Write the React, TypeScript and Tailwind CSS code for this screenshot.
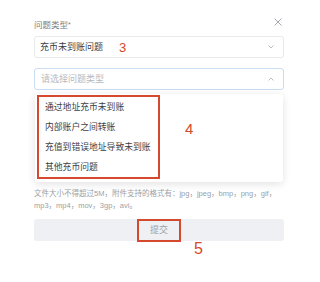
import React from "react";

const options = ["通过地址充币未到账", "内部账户之间转账", "充值到错误地址导致未到账", "其他充币问题"];

function Chevron({ up }: { up?: boolean }) {
  return (
    <svg width="6" height="4" viewBox="0 0 6 4" fill="none" stroke="#b3b6bc" strokeWidth="0.9">
      {up ? <path d="M0.5 3.5 3 1 5.5 3.5" /> : <path d="M0.5 0.5 3 3 5.5 0.5" />}
    </svg>
  );
}

export default function App() {
  return (
    <div className="h-[282px] w-[320px] overflow-hidden bg-white font-['Liberation_Sans','Noto_Sans_CJK_SC',sans-serif]">
      <div className="pl-[34px] pr-[36px] pt-[17px]">
        {/* Header */}
        <div className="flex h-[14px] items-start justify-between">
          <span className="mt-[2px] text-[8.5px] leading-[12px] text-[#7b7f86]">
            问题类型<span className="align-top text-[7px]">*</span>
          </span>
          <svg className="mr-[2px] mt-[1px]" width="8" height="8" viewBox="0 0 8 8" stroke="#9a9ea5" strokeWidth="0.9">
            <path d="M0.5 0.5 7.5 7.5M7.5 0.5 0.5 7.5" />
          </svg>
        </div>

        {/* Selected type */}
        <div className="mt-[5px] flex h-[22px] items-center justify-between rounded-[3px] border border-[#e7e9ec] pl-[5px] pr-[9px]">
          <div className="flex items-center">
            <span className="text-[9px] leading-none text-[#3a3d42]">充币未到账问题</span>
            <span className="ml-[16px] text-[13px] leading-none text-[#d4482c]">3</span>
          </div>
          <Chevron />
        </div>

        {/* Open select */}
        <div className="mt-[10px] flex h-[22px] items-center justify-between rounded-[3px] border border-[#cadcf1] pl-[6px] pr-[9px]">
          <span className="text-[9px] leading-none text-[#b5b9c0]">请选择问题类型</span>
          <Chevron up />
        </div>

        {/* Dropdown panel */}
        <div className="mx-[1px] mt-[4px] flex h-[88px] items-start rounded-[3px] bg-white pl-[2px] pt-[1px] shadow-[0_2px_8px_rgba(0,0,0,0.12)]">
          <div className="w-[123px] border-2 border-[#d5492e] pl-[6px]">
            {options.map((o) => (
              <div key={o} className="text-[8.8px] leading-[20px] text-[#3d4046]">
                {o}
              </div>
            ))}
          </div>
          <span className="ml-[25px] mt-[26px] text-[15px] leading-none text-[#d4482c]">4</span>
        </div>

        {/* Help text */}
        <p className="mt-[6px] text-[7.5px] leading-[12px] text-[#9b9fa6]">
          文件大小不得超过5M，附件支持的格式有：jpg，jpeg，bmp，png，gif，
          <br />
          mp3，mp4，mov，3gp，avi。
        </p>

        {/* Submit */}
        <div className="mt-[7px] flex h-[22px] items-start justify-center rounded-[3px] bg-[#eff0f3]">
          <div className="flex h-[23px] w-[44px] items-center justify-center border-2 border-[#d5492e]">
            <span className="text-[9px] leading-none text-[#9ea2a9]">提交</span>
          </div>
        </div>
        <div className="ml-[160px] text-[16px] leading-none text-[#d4482c]">5</div>
      </div>
    </div>
  );
}
